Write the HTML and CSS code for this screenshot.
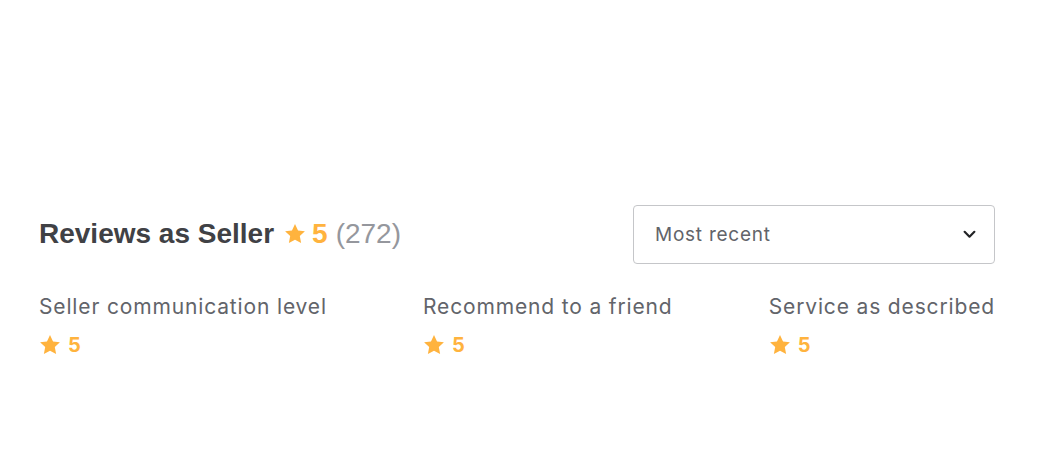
FILE: index.html
```html
<!DOCTYPE html>
<html lang="en">
<head>
<meta charset="utf-8">
<title>Reviews as Seller</title>
<link rel="stylesheet" href="styles.css">
</head>
<body>
<section class="reviews">
  <header class="reviews-head">
    <h2 class="title">Reviews as Seller
      <span class="summary">
        <svg class="star star-lg" viewBox="0 0 16 16" aria-hidden="true"><path d="M8 0.8l2.2 4.6 5 .6-3.7 3.5.95 5L8 12.1 3.55 14.5l.95-5L.8 6l5-.6z"/></svg>
        <span class="score">5</span>
        <span class="count">(272)</span>
      </span>
    </h2>
    <div class="sort">
      <span class="sort-label">Most recent</span>
      <svg class="chev" viewBox="0 0 12 8" aria-hidden="true"><path d="M1.5 1.5L6 6l4.5-4.5"/></svg>
    </div>
  </header>
  <div class="breakdown">
    <div class="metric">
      <div class="metric-name">Seller communication level</div>
      <div class="metric-score"><svg class="star" viewBox="0 0 16 16" aria-hidden="true"><path d="M8 0.8l2.2 4.6 5 .6-3.7 3.5.95 5L8 12.1 3.55 14.5l.95-5L.8 6l5-.6z"/></svg><span>5</span></div>
    </div>
    <div class="metric">
      <div class="metric-name">Recommend to a friend</div>
      <div class="metric-score"><svg class="star" viewBox="0 0 16 16" aria-hidden="true"><path d="M8 0.8l2.2 4.6 5 .6-3.7 3.5.95 5L8 12.1 3.55 14.5l.95-5L.8 6l5-.6z"/></svg><span>5</span></div>
    </div>
    <div class="metric">
      <div class="metric-name">Service as described</div>
      <div class="metric-score"><svg class="star" viewBox="0 0 16 16" aria-hidden="true"><path d="M8 0.8l2.2 4.6 5 .6-3.7 3.5.95 5L8 12.1 3.55 14.5l.95-5L.8 6l5-.6z"/></svg><span>5</span></div>
    </div>
  </div>
</section>
</body>
</html>
```

FILE: styles.css
```css
html, body {
  margin: 0;
  padding: 0;
  background: #ffffff;
}

body {
  font-family: "Inter", "Liberation Sans", Arial, sans-serif;
}

.reviews {
  padding: 205px 65px 0 39px;
}

.reviews-head {
  display: flex;
  align-items: center;
  justify-content: space-between;
}

.title {
  margin: 0;
  padding-bottom: 2px;
  font-family: "Liberation Sans", Arial, sans-serif;
  font-weight: 700;
  font-size: 28px;
  line-height: 34px;
  color: #404145;
  display: flex;
  align-items: center;
  white-space: nowrap;
}

.summary {
  display: inline-flex;
  align-items: center;
  margin-left: 10px;
}

.star {
  width: 22px;
  height: 22px;
  fill: #ffb33e;
  flex: none;
}

.star-lg {
  width: 22px;
  height: 22px;
  margin-right: 6px;
}

.score {
  color: #ffb33e;
  font-weight: 700;
}

.count {
  color: #95979d;
  font-weight: 400;
  margin-left: 8px;
}

.sort {
  box-sizing: border-box;
  width: 362px;
  height: 59px;
  border: 1px solid #c5c6c9;
  border-radius: 4px;
  display: flex;
  align-items: center;
  justify-content: space-between;
  padding: 0 18px 0 21px;
}

.sort-label {
  font-size: 19px;
  color: #62646a;
  letter-spacing: 0.75px;
}

.chev {
  width: 13px;
  height: 9px;
  fill: none;
  stroke: #222325;
  stroke-width: 2;
  stroke-linecap: round;
  stroke-linejoin: round;
}

.breakdown {
  display: flex;
  justify-content: space-between;
  margin-top: 28px;
}

.metric-name {
  font-size: 21px;
  line-height: 30px;
  color: #62646a;
  letter-spacing: 0.85px;
}

.metric-score {
  display: flex;
  align-items: center;
  gap: 7px;
  margin-top: 11px;
  font-size: 20px;
  font-weight: 700;
  color: #ffb33e;
}
```
